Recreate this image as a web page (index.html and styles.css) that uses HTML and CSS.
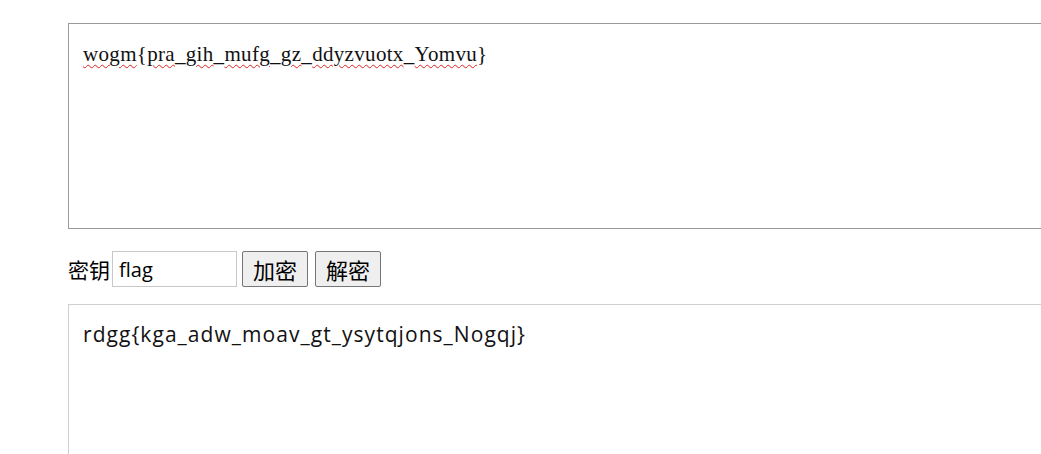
FILE: index.html
```html
<!DOCTYPE html>
<html lang="zh">
<head>
<meta charset="utf-8">
<title>加密</title>
<link rel="stylesheet" href="styles.css">
</head>
<body>
<div class="page">
  <div class="box box-in"><span class="sp">wogm</span>{<span class="sp">pra</span>_<span class="sp">gih</span>_<span class="sp">mufg</span>_<span class="sp">gz</span>_<span class="sp">ddyzvuotx</span>_<span class="sp">Yomvu</span>}</div>
  <div class="controls">
    <span class="label">密钥</span>
    <span class="key">flag</span>
    <button class="btn">加密</button>
    <button class="btn">解密</button>
  </div>
  <div class="box box-out">rdgg{kga_adw_moav_gt_ysytqjons_Nogqj}</div>
</div>
</body>
</html>
```
FILE: styles.css
```css
html, body {
  margin: 0;
  padding: 0;
  background: #fff;
  overflow: hidden;
}
.page {
  padding: 23px 0 0 68px;
  width: 1100px;
}
.box {
  box-sizing: border-box;
  width: 1000px;
  padding: 18px 14px;
  color: #000;
}
.box-in {
  height: 206px;
  border: 1px solid #9a9a9a;
  font-family: "Liberation Serif", serif;
  font-size: 21px;
  letter-spacing: 0.32px;
  line-height: 24px;
  color: #111;
}
.sp {
  text-decoration: underline wavy #e02020;
  text-decoration-thickness: 1px;
  text-underline-offset: 3px;
}
.controls {
  box-sizing: border-box;
  display: flex;
  align-items: center;
  height: 75px;
  padding-top: 4px;
  font-family: "Noto Sans CJK SC", sans-serif;
  font-size: 21px;
}
.label {
  width: 44px;
}
.key {
  box-sizing: border-box;
  width: 125px;
  height: 36px;
  border: 1px solid #c8c8c8;
  padding: 0 6px;
  display: flex;
  align-items: center;
  font-family: "Open Sans", sans-serif;
  font-size: 20px;
  margin-top: 1px;
}
.btn {
  box-sizing: border-box;
  height: 36px;
  width: 66px;
  margin-left: 5px;
  padding: 0;
  border: 1px solid #767676;
  border-radius: 2px;
  background: #efefef;
  font-family: "Noto Sans CJK SC", sans-serif;
  font-size: 22px;
  line-height: 1;
  color: #000;
}
.btn + .btn {
  margin-left: 7px;
}
.box-out {
  height: 200px;
  border: 1px solid #cfcfcf;
  font-family: "Open Sans", sans-serif;
  font-size: 21px;
  letter-spacing: 1.05px;
  line-height: 28px;
  padding-top: 15px;
  color: #111;
}
```
